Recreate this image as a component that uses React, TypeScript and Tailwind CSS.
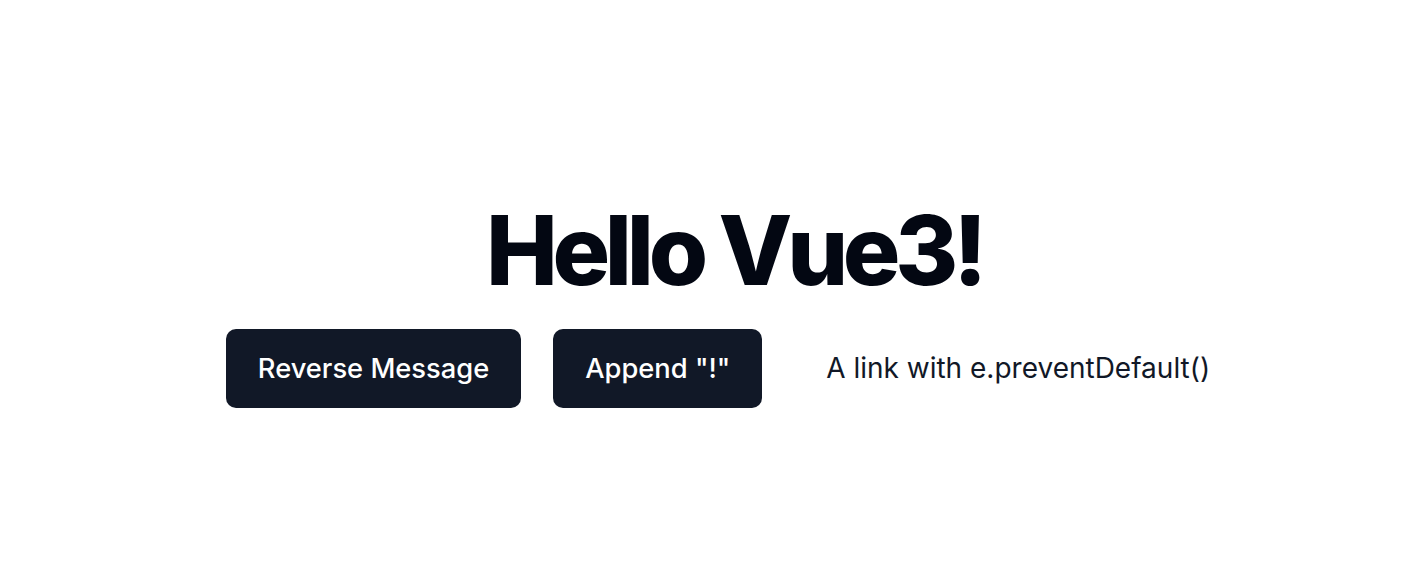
export default function App() {
  return (
    <div
      className="flex min-h-[586px] w-full flex-col items-center bg-white pl-[56px] pt-[202px] text-[#030712]"
      style={{ fontFamily: 'Inter, "Noto Sans", sans-serif' }}
    >
      <h1 className="text-8xl font-extrabold tracking-[-0.055em]">Hello Vue3!</h1>
      <div className="mt-[31px] flex items-center gap-8">
        <button
          type="button"
          className="rounded-[10px] bg-[#111827] px-8 py-6 text-[27.3px] leading-[31px] font-medium text-white"
        >
          Reverse Message
        </button>
        <button
          type="button"
          className="rounded-[10px] bg-[#111827] px-8 py-6 text-[27.3px] leading-[31px] font-medium text-white"
        >
          Append "!"
        </button>
        <a
          href="#"
          onClick={(e) => e.preventDefault()}
          className="px-8 py-6 text-[28px] leading-[31px] font-normal text-[#111827]"
        >
          A link with e.preventDefault()
        </a>
      </div>
    </div>
  );
}
